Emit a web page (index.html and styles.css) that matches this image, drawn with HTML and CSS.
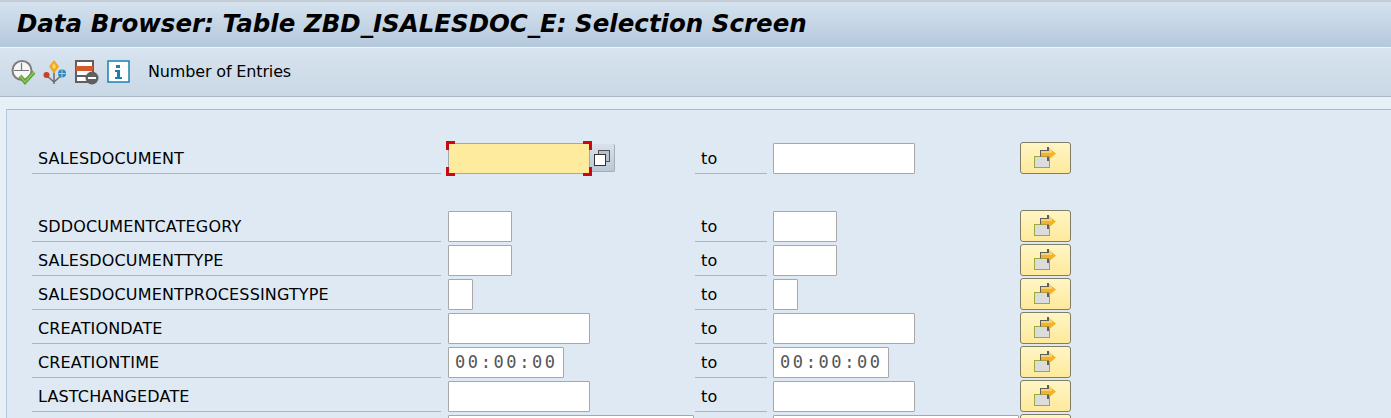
FILE: index.html
```html
<!DOCTYPE html>
<html lang="en">
<head>
    <meta charset="UTF-8">
    <title>Data Browser: Table ZBD_ISALESDOC_E: Selection Screen</title>
    <link rel="stylesheet" href="styles.css">
</head>

<body>
    <svg class="defs" width="0" height="0">
        <symbol id="multi" viewBox="0 0 23 22">
            <rect x="0.500" y="9.500" width="15" height="11" fill="#dcdcdc" stroke="#9aaa3c"/>
            <path d="M6 3h7V0h2v3h1v9h-1v2h-2V9.500H6z" fill="#5f5f5f"/>
            <path d="M7 4h8V1l7 5.500-7 6V9.500H7z" fill="#f2b32a"/>
            <path d="M7 4h8V1l3 2.500V6H7z" fill="#f8d36a"/>
        </symbol>
    </svg>

    <div class="title-bar">
        <h1>Data Browser: Table ZBD_ISALESDOC_E: Selection Screen</h1>
    </div>

    <div class="toolbar">
        <svg class="tool-icon" width="24" height="25" viewBox="0 0 24 25">
            <circle cx="11" cy="10.500" r="9.500" fill="#f6f6f6" stroke="#7d7d7d" stroke-width="2"/>
            <path d="M10.500 3v7.500M3 10.500h15" stroke="#777" stroke-width="1.200" fill="none"/>
            <path d="M9 16l5 6 9-10" stroke="#5fa03a" stroke-width="4" fill="none"/>
            <path d="M9 16l5 6 9-10" stroke="#8fc95a" stroke-width="1.200" fill="none"/>
        </svg>
        <svg class="tool-icon" width="24" height="25" viewBox="0 0 24 25">
            <path d="M11 8v16M3 15l8 7 9-8" stroke="#6d6d6d" stroke-width="1.500" fill="none"/>
            <path d="M11 0l5 6.500-5 7-5-7z" fill="#f0a81f"/>
            <path d="M11 3l2 3.500-2 3-2-3z" fill="#fbd56b"/>
            <circle cx="3.500" cy="15" r="3" fill="#c4402a"/>
            <circle cx="19" cy="13.500" r="4" fill="#2f86b5"/>
            <path d="M19 10v7M15.500 13.500h7" stroke="#a9d3ea" stroke-width="1"/>
        </svg>
        <svg class="tool-icon" width="24" height="25" viewBox="0 0 24 25">
            <rect x="1" y="1" width="17" height="21" fill="#fff" stroke="#5f5f5f" stroke-width="2"/>
            <rect x="1" y="6" width="17" height="5" fill="#d45a2c"/>
            <path d="M1 16h11" stroke="#5f5f5f" stroke-width="2"/>
            <circle cx="17" cy="18" r="6.500" fill="#5f5f5f"/>
            <path d="M13 18h8" stroke="#fff" stroke-width="2"/>
        </svg>
        <svg class="tool-icon" width="23" height="24" viewBox="0 0 23 24">
            <rect x="1" y="1" width="21" height="21" fill="#fff" stroke="#1d7fb0" stroke-width="1.500"/>
            <path d="M9 5h4v3H9zM8 10h5v7h2v2H8v-2h2v-5H8z" fill="#1d7fb0"/>
        </svg>
        <span class="tool-text">Number of Entries</span>
    </div>

    <div class="panel">
        <div class="row row-first">
            <label class="lbl">SALESDOCUMENT</label>
            <div class="cell">
                <div class="focus-wrap">
                    <div class="field w-date focused"></div>
                    <span class="mark tl"></span>
                    <span class="mark tr"></span>
                    <span class="mark bl"></span>
                    <span class="mark br"></span>
                </div>
                <button class="copy-btn">
                    <svg width="18" height="18" viewBox="0 0 18 18">
                        <rect x="5.500" y="1.500" width="11" height="11" fill="#b9c0c8" stroke="#555"/>
                        <rect x="1.500" y="5.500" width="11" height="11" fill="#fff" stroke="#333"/>
                    </svg>
                </button>
            </div>
            <span class="to">to</span>
            <div class="cell"><div class="field w-date"></div></div>
            <button class="multi"><svg width="23" height="22"><use href="#multi"/></svg></button>
        </div>

        <div class="row">
            <label class="lbl">SDDOCUMENTCATEGORY</label>
            <div class="cell"><div class="field w-4"></div></div>
            <span class="to">to</span>
            <div class="cell"><div class="field w-4"></div></div>
            <button class="multi"><svg width="23" height="22"><use href="#multi"/></svg></button>
        </div>
        <div class="row">
            <label class="lbl">SALESDOCUMENTTYPE</label>
            <div class="cell"><div class="field w-4"></div></div>
            <span class="to">to</span>
            <div class="cell"><div class="field w-4"></div></div>
            <button class="multi"><svg width="23" height="22"><use href="#multi"/></svg></button>
        </div>
        <div class="row">
            <label class="lbl">SALESDOCUMENTPROCESSINGTYPE</label>
            <div class="cell"><div class="field w-1"></div></div>
            <span class="to">to</span>
            <div class="cell"><div class="field w-1"></div></div>
            <button class="multi"><svg width="23" height="22"><use href="#multi"/></svg></button>
        </div>
        <div class="row">
            <label class="lbl">CREATIONDATE</label>
            <div class="cell"><div class="field w-date"></div></div>
            <span class="to">to</span>
            <div class="cell"><div class="field w-date"></div></div>
            <button class="multi"><svg width="23" height="22"><use href="#multi"/></svg></button>
        </div>
        <div class="row">
            <label class="lbl">CREATIONTIME</label>
            <div class="cell"><div class="field w-time">00:00:00</div></div>
            <span class="to">to</span>
            <div class="cell"><div class="field w-time">00:00:00</div></div>
            <button class="multi"><svg width="23" height="22"><use href="#multi"/></svg></button>
        </div>
        <div class="row">
            <label class="lbl">LASTCHANGEDATE</label>
            <div class="cell"><div class="field w-date"></div></div>
            <span class="to">to</span>
            <div class="cell"><div class="field w-date"></div></div>
            <button class="multi"><svg width="23" height="22"><use href="#multi"/></svg></button>
        </div>
        <div class="row">
            <div class="blank"></div>
            <div class="cell"><div class="field w-full"></div></div>
            <div class="blank"></div>
            <div class="cell"><div class="field w-full"></div></div>
            <button class="multi"></button>
        </div>
    </div>
</body>
</html>
```

FILE: styles.css
```css
* {
    margin: 0;
    padding: 0;
    box-sizing: border-box;
}

html, body {
    height: 418px;
    overflow: hidden;
}

body {
    font-family: "DejaVu Sans", sans-serif;
    background-color: #e8f0f7;
    color: #000;
}

.defs {
    position: absolute;
}

.title-bar {
    height: 48px;
    padding: 6px 0 0 17px;
    background: linear-gradient(#d5e2ee, #b4c8dc);
    border-top: 2px solid #c4ccd6;
    border-bottom: 1px solid #eef3f8;
}

h1 {
    font-size: 24.500px;
    font-style: italic;
    font-weight: bold;
    line-height: 32px;
    color: #000;
}

.toolbar {
    height: 49px;
    display: flex;
    align-items: center;
    padding-left: 11px;
    background: linear-gradient(#d8e4ef, #c9d8e6);
    border-bottom: 1px solid #a9b6c4;
}

.tool-icon {
    margin-right: 8px;
    flex: none;
}

.tool-text {
    margin: -2px 0 0 10px;
    font-size: 16px;
    letter-spacing: -0.150px;
}

.panel {
    margin: 12px 0 0 6px;
    height: 309px;
    overflow: hidden;
    padding: 31px 0 0 25px;
    background-color: #dee9f4;
    border-top: 1px solid #a4b8d0;
    border-left: 1px solid #b6c7da;
}

.row {
    display: grid;
    grid-template-columns: 416px 247px 78px 247px 51px;
    height: 34px;
    padding-top: 1px;
    align-items: start;
}

.row-first {
    margin-bottom: 34px;
}

.lbl,
.to {
    display: block;
    height: 32px;
    line-height: 34px;
    padding-left: 6px;
    font-size: 16px;
    letter-spacing: 0.150px;
    border-bottom: 1px solid #abb5bf;
}

.lbl {
    margin-right: 7px;
}

.to {
    margin-right: 6px;
}

.cell {
    height: 32px;
    display: flex;
    align-items: flex-end;
}

.field {
    height: 31px;
    background-color: #fff;
    border: 1px solid #a8a8a8;
    border-radius: 1px;
}

.w-1 { width: 25px; }
.w-4 { width: 64px; }
.w-date { width: 142px; }
.w-time {
    width: 116px;
    padding-left: 6px;
    font-family: "DejaVu Sans Mono", monospace;
    font-size: 17px;
    line-height: 28px;
    letter-spacing: 2.600px;
    color: #555;
}
.w-full { width: 246px; }

.focused {
    background-color: #ffeb9d;
}

.focus-wrap {
    position: relative;
}

.mark {
    position: absolute;
    width: 9px;
    height: 9px;
    border: 0 solid #c8090f;
}

.tl { left: -2px; top: -2px; border-width: 3px 0 0 3px; }
.tr { right: -2px; top: -2px; border-width: 3px 3px 0 0; }
.bl { left: -2px; bottom: -2px; border-width: 0 0 3px 3px; }
.br { right: -2px; bottom: -2px; border-width: 0 3px 3px 0; }

.copy-btn {
    width: 25px;
    height: 28px;
    margin-bottom: 2px;
    display: flex;
    align-items: center;
    justify-content: center;
    background: linear-gradient(#d9e2ea, #b9c6d4);
    border: none;
    border-right: 1px solid #a5aeb8;
    border-bottom: 1px solid #a5aeb8;
    border-radius: 0 2px 2px 0;
}

.multi {
    width: 51px;
    height: 32px;
    display: flex;
    align-items: center;
    justify-content: center;
    background: linear-gradient(#fff6c4, #fee99c);
    border: 1px solid #7f7c68;
    border-radius: 3px;
}
```
